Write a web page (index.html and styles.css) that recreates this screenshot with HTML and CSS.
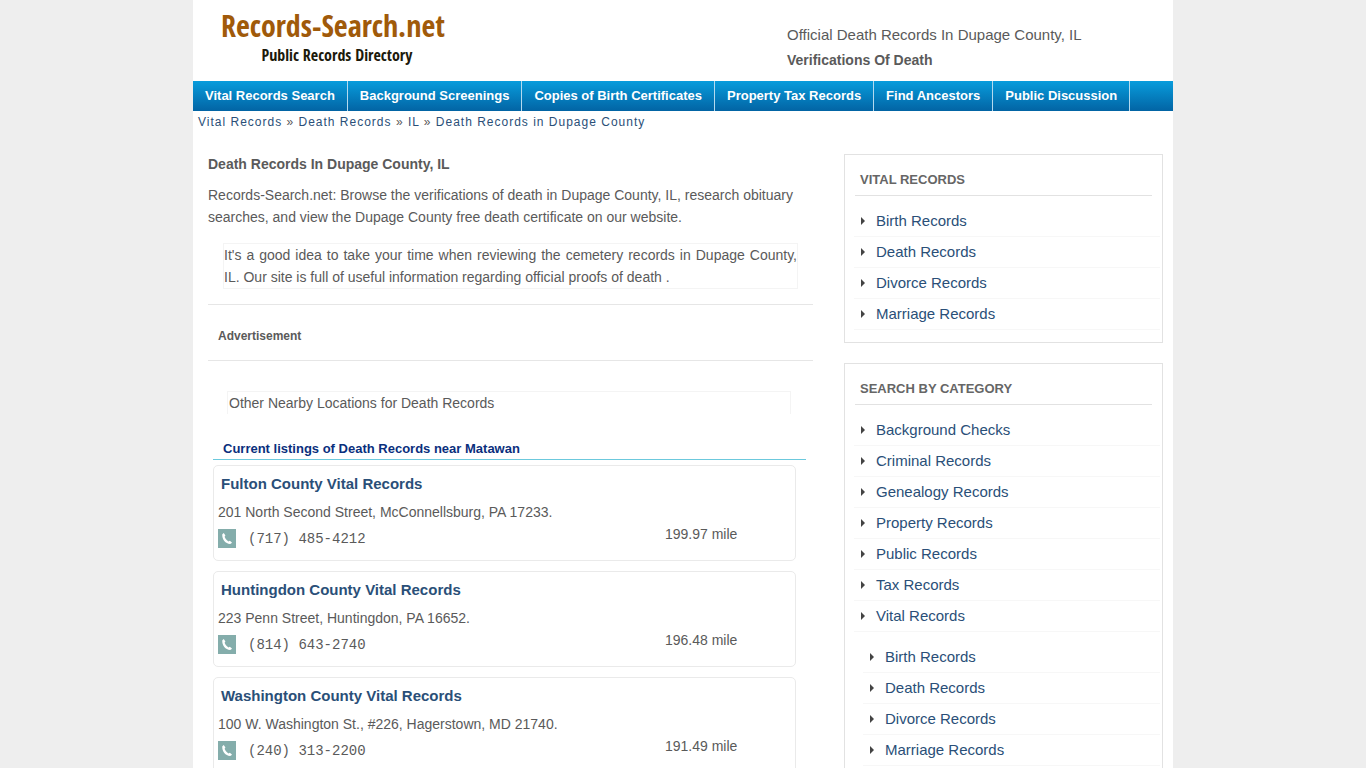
FILE: index.html
```html
<!DOCTYPE html>
<html lang="en">
<head>
<meta charset="utf-8">
<meta name="viewport" content="width=device-width, initial-scale=1">
<title>Death Records In Dupage County, IL</title>
<link rel="stylesheet" href="styles.css">
</head>
<body>
<svg class="sprite" aria-hidden="true">
  <symbol id="phone" viewBox="0 0 18 19">
    <path d="M4.300 5.200 5.800 4 7.400 6.500 6.600 7.800C7.400 9.900 8.800 11.300 10.500 12.400L11.800 11.700 14 13.400 12.900 14.800C8.400 15.600 3.600 10.400 4.300 5.200Z" fill="#fff"/>
  </symbol>
</svg>
<div class="page">
  <header class="header">
    <a class="logo" href="#">
      <span class="logo-name">Records-Search.net</span>
      <span class="logo-tag">Public Records Directory</span>
    </a>
    <div class="tagline">
      <p class="tagline-main">Official Death Records In Dupage County, IL</p>
      <p class="tagline-sub">Verifications Of Death</p>
    </div>
  </header>

  <nav class="nav">
    <a href="#">Vital Records Search</a>
    <a href="#">Background Screenings</a>
    <a href="#">Copies of Birth Certificates</a>
    <a href="#">Property Tax Records</a>
    <a href="#">Find Ancestors</a>
    <a href="#">Public Discussion</a>
  </nav>

  <div class="crumbs"><a href="#">Vital Records</a> » <a href="#">Death Records</a> » <a href="#">IL</a> » <a href="#">Death Records in Dupage County</a></div>

  <div class="columns">
    <main class="main">
      <h1 class="title">Death Records In Dupage County, IL</h1>
      <p class="intro">Records-Search.net: Browse the verifications of death in Dupage County, IL, research obituary searches, and view the Dupage County free death certificate on our website.</p>
      <p class="note">It's a good idea to take your time when reviewing the cemetery records in Dupage County, IL. Our site is full of useful information regarding official proofs of death .</p>
      <div class="ad">Advertisement</div>
      <p class="nearby">Other Nearby Locations for Death Records</p>
      <section class="listings">
        <h2 class="listings-title">Current listings of Death Records near Matawan</h2>
        <article class="card">
          <h3><a href="#">Fulton County Vital Records</a></h3>
          <div class="card-body">
            <div class="contact">
              <p>201 North Second Street, McConnellsburg, PA 17233.</p>
              <p class="phone"><svg class="phone-icon" aria-hidden="true"><use href="#phone"/></svg>(717) 485-4212</p>
            </div>
            <p class="distance">199.97 mile</p>
          </div>
        </article>
        <article class="card">
          <h3><a href="#">Huntingdon County Vital Records</a></h3>
          <div class="card-body">
            <div class="contact">
              <p>223 Penn Street, Huntingdon, PA 16652.</p>
              <p class="phone"><svg class="phone-icon" aria-hidden="true"><use href="#phone"/></svg>(814) 643-2740</p>
            </div>
            <p class="distance">196.48 mile</p>
          </div>
        </article>
        <article class="card">
          <h3><a href="#">Washington County Vital Records</a></h3>
          <div class="card-body">
            <div class="contact">
              <p>100 W. Washington St., #226, Hagerstown, MD 21740.</p>
              <p class="phone"><svg class="phone-icon" aria-hidden="true"><use href="#phone"/></svg>(240) 313-2200</p>
            </div>
            <p class="distance">191.49 mile</p>
          </div>
        </article>
      </section>
    </main>

    <aside class="sidebar">
      <section class="box">
        <h2>VITAL RECORDS</h2>
        <ul class="links">
          <li><a href="#">Birth Records</a></li>
          <li><a href="#">Death Records</a></li>
          <li><a href="#">Divorce Records</a></li>
          <li><a href="#">Marriage Records</a></li>
        </ul>
      </section>
      <section class="box">
        <h2>SEARCH BY CATEGORY</h2>
        <ul class="links">
          <li><a href="#">Background Checks</a></li>
          <li><a href="#">Criminal Records</a></li>
          <li><a href="#">Genealogy Records</a></li>
          <li><a href="#">Property Records</a></li>
          <li><a href="#">Public Records</a></li>
          <li><a href="#">Tax Records</a></li>
          <li><a href="#">Vital Records</a></li>
        </ul>
        <ul class="links links-nested">
          <li><a href="#">Birth Records</a></li>
          <li><a href="#">Death Records</a></li>
          <li><a href="#">Divorce Records</a></li>
          <li><a href="#">Marriage Records</a></li>
        </ul>
      </section>
    </aside>
  </div>
</div>
</body>
</html>
```
FILE: styles.css
```css
* {
  box-sizing: border-box;
}

body {
  margin: 0;
  background: #eee;
  color: #5a5a5a;
  font: 14px/22px "Liberation Sans", Arial, sans-serif;
}

h1, h2, h3, p, ul {
  margin: 0;
  padding: 0;
}

a {
  color: #2a4f78;
  text-decoration: none;
}

.sprite {
  display: none;
}

.page {
  max-width: 980px;
  margin: 0 auto;
  background: #fff;
}

.header {
  display: flex;
  justify-content: space-between;
  min-height: 81px;
  padding: 8px 10px 0 28px;
}

.logo {
  display: flex;
  flex-direction: column;
  align-items: center;
  font-family: "Open Sans Condensed", "Roboto Condensed", "Liberation Sans", Arial, sans-serif;
  font-weight: bold;
  white-space: nowrap;
}

.logo-name {
  color: #a05a0a;
  font-size: 30px;
  line-height: 36px;
}

.logo-tag {
  padding-left: 8px;
  color: #1c1a0c;
  font-size: 16px;
  line-height: 22px;
}

.tagline {
  flex: 0 0 376px;
  padding-top: 14px;
}

.tagline-main {
  font-size: 15px;
  line-height: 26px;
}

.tagline-sub {
  font-weight: bold;
  line-height: 24px;
}

.nav {
  display: flex;
  flex-wrap: wrap;
  background: linear-gradient(#089cdc, #0264a4);
}

.nav a {
  padding: 0 12px;
  border-right: 1px solid #b5daef;
  color: #fff;
  font-size: 13px;
  font-weight: bold;
  line-height: 30px;
}

.crumbs {
  padding-left: 5px;
  font-size: 12px;
  letter-spacing: 1px;
}

.columns {
  display: grid;
  grid-template-columns: minmax(0, 1fr) 319px;
  gap: 31px;
  padding: 20px 10px 20px 15px;
}

.title {
  font-size: 14px;
}

.intro {
  margin-top: 9px;
}

.note {
  margin: 15px 15px;
  border: 1px solid #f4f4f4;
  text-align: justify;
}

.ad {
  padding: 20px 10px 13px;
  border: solid #e6e6e6;
  border-width: 1px 0;
  font-size: 12px;
  font-weight: bold;
}

.nearby {
  margin: 30px 22px 0 19px;
  padding-left: 1px;
  border: solid #f4f4f4;
  border-width: 1px 1px 0;
}

.listings {
  margin: 25px 7px 0 5px;
}

.listings-title {
  padding-left: 10px;
  border-bottom: 1px solid #6cc9dd;
  color: #0a2f7d;
  font-size: 13px;
  line-height: 20px;
}

.card {
  margin: 5px 10px 10px 0;
  padding: 7px 4px 10px;
  border: 1px solid #eaeaea;
  border-radius: 5px;
}

.card h3 {
  padding-left: 3px;
  font-size: 15px;
}

.card-body {
  display: flex;
  justify-content: space-between;
  align-items: flex-end;
}

.contact {
  padding-top: 6px;
}

.phone {
  display: flex;
  align-items: center;
  gap: 12px;
  margin-top: 5px;
  font-family: "Liberation Mono", "Courier New", monospace;
}

.phone-icon {
  width: 18px;
  height: 19px;
  margin-bottom: 2px;
  background: #84adab;
}

.distance {
  flex: 0 0 126px;
  padding-bottom: 5px;
}

.sidebar {
  padding-top: 1px;
}

.box {
  margin-bottom: 20px;
  padding: 14px 2px 12px 9px;
  border: 1px solid #e2e2e2;
}

.box h2 {
  margin: 0 8px 10px 1px;
  padding: 0 5px 4px;
  border-bottom: 1px solid #e2e2e2;
  color: #666;
  font-size: 13px;
}

.links {
  list-style: none;
}

.links-nested {
  margin: 10px 0 0 9px;
}

.links li {
  display: flex;
  align-items: center;
  gap: 11px;
  padding-left: 7px;
  border-bottom: 1px solid #f7f7f7;
  font-size: 15px;
  line-height: 30px;
}

.links li::before {
  content: "";
  border: solid transparent;
  border-width: 4px 0 4px 4px;
  border-left-color: #444;
}
```
